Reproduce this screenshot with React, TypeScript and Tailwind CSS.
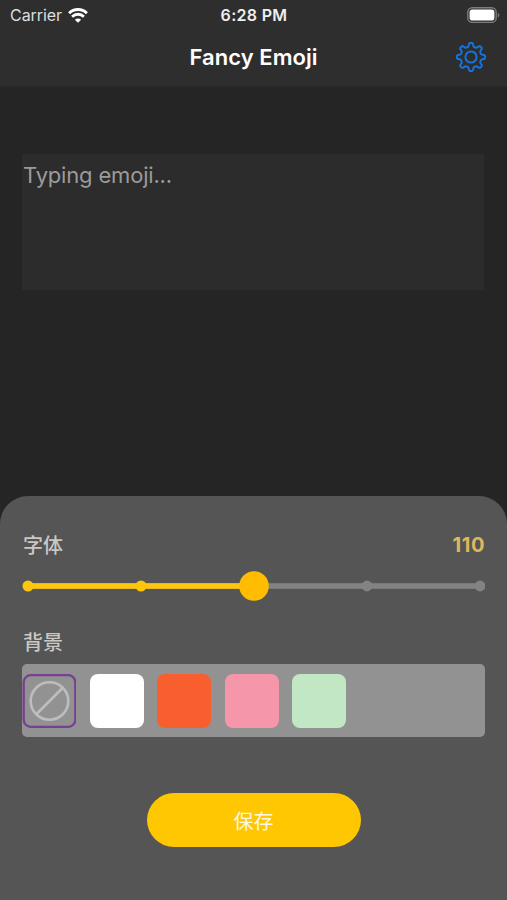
import clsx from "clsx";

const GEAR_PATH =
  Array.from({ length: 192 }, (_, i) => {
    const angle = (i / 192) * Math.PI * 2;
    const r = 12.3 + 1.9 * Math.tanh(2.2 * (Math.cos(angle * 8) - 0.12));
    const x = 16 + r * Math.sin(angle);
    const y = 16 - r * Math.cos(angle);
    return `${i === 0 ? "M" : "L"}${x.toFixed(2)} ${y.toFixed(2)}`;
  }).join("") + "Z";

const GearIcon = () => (
  <svg width="32" height="32" viewBox="0 0 32 32" fill="none" stroke="#1673dc" strokeWidth="2">
    <path d={GEAR_PATH} strokeLinejoin="round" />
    <circle cx="16" cy="16" r="5.6" />
  </svg>
);

const WifiIcon = () => (
  <svg width="20" height="15" viewBox="0 0 20 15" fill="none" stroke="#fff" strokeWidth="2.8">
    <path d="M1.1 5.2a12.6 12.6 0 0 1 17.8 0" />
    <path d="M4.1 8.7a8.3 8.3 0 0 1 11.8 0" />
    <path d="M10 14.8 6.9 11.7a4.4 4.4 0 0 1 6.2 0Z" fill="#fff" stroke="none" />
  </svg>
);

const BatteryIcon = () => (
  <svg width="33" height="17" viewBox="0 0 33 17" fill="none">
    <rect x="0.8" y="0.8" width="28.4" height="14.6" rx="4.5" stroke="#7d7d7d" strokeWidth="1.4" />
    <rect x="2.6" y="2.6" width="24.8" height="11" rx="2.8" fill="#fff" />
    <path d="M30.8 5.8v4.8c2-.8 2-4 0-4.8Z" fill="#7d7d7d" />
  </svg>
);

const Header = () => (
  <header className="h-[87px] bg-[#2e2e2e] border-b border-[#292929]">
    <div className="grid grid-cols-3 items-center h-[30px] pl-[10px] pr-[7px]">
      <div className="flex items-center gap-[6px] text-[16px] text-[#dedede] tracking-[-0.05px]">
        Carrier
        <WifiIcon />
      </div>
      <div className="text-center text-[16px] font-semibold text-[#efefef] tracking-[0.3px] pr-[2px]">
        6:28 PM
      </div>
      <div className="flex justify-end">
        <BatteryIcon />
      </div>
    </div>
    <div className="grid grid-cols-[48px_1fr_48px] items-center h-[54px] px-[12px]">
      <span />
      <h1 className="text-center text-[22px] font-semibold text-white tracking-[0.05px]">Fancy Emoji</h1>
      <button className="flex justify-center">
        <GearIcon />
      </button>
    </div>
  </header>
);

const FontSlider = () => (
  <svg className="block" width="463" height="32" viewBox="0 0 463 32">
    <rect x="6" y="13.2" width="452" height="5.6" fill="#838383" />
    <circle cx="345" cy="16" r="5.4" fill="#838383" />
    <circle cx="458" cy="16" r="5.4" fill="#838383" />
    <rect x="6" y="13.2" width="226" height="5.6" fill="#ffc60c" />
    <circle cx="6" cy="16" r="5.5" fill="#ffc60c" />
    <circle cx="119" cy="16" r="5.5" fill="#ffc60c" />
    <circle cx="232" cy="16" r="14.8" fill="#ffbc00" />
  </svg>
);

const colors = ["bg-white", "bg-[#f95e2f]", "bg-[#f596aa]", "bg-[#c1e7c5]"];

const BackgroundPicker = () => (
  <div className="flex items-center gap-[13.5px] h-[73px] rounded-[5px] bg-[#929292]">
    <button className="size-[54px]">
      <svg className="block" width="54" height="54" viewBox="0 0 54 54" fill="none">
        <rect x="1.7" y="1.2" width="51.6" height="51.6" rx="7" stroke="#774092" strokeWidth="2.3" />
        <g stroke="#bdbdbd" strokeWidth="2.6">
          <circle cx="27.5" cy="27" r="18.8" />
          <path d="M14.5 40 40.5 14" />
        </g>
      </svg>
    </button>
    {colors.map((color) => (
      <button key={color} className={clsx("size-[54px] rounded-[8px]", color)} />
    ))}
  </div>
);

export default function App() {
  return (
    <div className="flex flex-col w-[507px] h-[900px] overflow-hidden bg-[#252525] font-[Inter,'Noto_Sans_CJK_SC',sans-serif]">
      <Header />
      <main className="flex-1 pt-[67px] px-[22px]">
        <div className="w-[462px] h-[136px] bg-[#2c2c2c] pt-[4px] pl-[1px] text-[22px] leading-[34px] text-[#9b9b9b] tracking-[-0.18px]">
          Typing emoji...
        </div>
      </main>
      <section className="h-[404px] rounded-t-[28px] bg-[#555] pl-[22px] pr-[22px] pt-[34px]">
        <div className="flex items-center justify-between h-[30px] pl-[1px]">
          <span className="pt-[2px] text-[20px] font-medium text-[#c9c8c4]">字体</span>
          <span className="text-[20px] font-bold text-[#deb75c] tracking-[0.6px]">110</span>
        </div>
        <div className="pt-[10px]">
          <FontSlider />
        </div>
        <div className="flex items-center h-[30px] mt-[25px] pl-[1px]">
          <span className="pt-[2px] text-[20px] font-medium text-[#c9c8c4]">背景</span>
        </div>
        <div className="pt-[7px]">
          <BackgroundPicker />
        </div>
        <div className="flex justify-center pt-[56px]">
          <button className="w-[214px] h-[54px] rounded-full bg-[#ffc602] pt-[3px] text-[20px] text-[#fff9e4]">
            保存
          </button>
        </div>
      </section>
    </div>
  );
}
